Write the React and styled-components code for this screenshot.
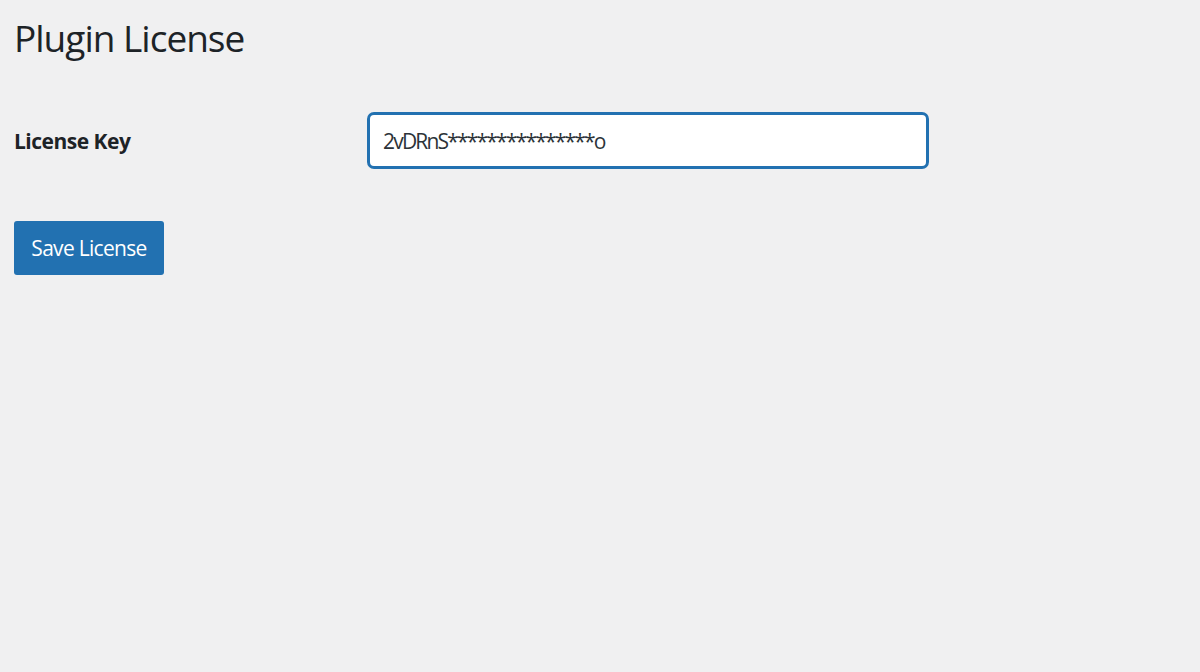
import React, { useState } from 'react';
import styled, { createGlobalStyle } from 'styled-components';

const GlobalStyle = createGlobalStyle`
  html, body {
    margin: 0;
    padding: 0;
    background: #f0f0f1;
  }
  body {
    font-family: "Open Sans", "Noto Sans", sans-serif;
    color: #1d2327;
  }
`;

const Page = styled.div`
  min-height: 672px;
  padding: 16px 14px 0;
  box-sizing: border-box;
`;

const Title = styled.h1`
  margin: 0;
  font-size: 37px;
  font-weight: 400;
  line-height: 44px;
  letter-spacing: -1px;
  color: #1d2327;
`;

const Form = styled.form`
  display: flex;
  flex-direction: column;
  align-items: flex-start;
  margin-top: 52px;
`;

const Row = styled.div`
  display: flex;
  align-items: center;
`;

const Label = styled.label`
  width: 353px;
  font-size: 21px;
  font-weight: 700;
  letter-spacing: -0.5px;
  color: #1d2327;
`;

const KeyInput = styled.input`
  width: 562px;
  height: 57px;
  box-sizing: border-box;
  padding: 0 13px;
  border: 3px solid #2271b1;
  border-radius: 7px;
  background: #fff;
  font-family: "Open Sans", "Noto Sans", sans-serif;
  font-size: 21px;
  letter-spacing: -1.8px;
  color: #2c3338;
  outline: none;
`;

const SaveButton = styled.button`
  margin-top: 52px;
  width: 150px;
  height: 54px;
  border: none;
  border-radius: 3px;
  background: #2271b1;
  color: #fff;
  font-family: "Open Sans", "Noto Sans", sans-serif;
  font-size: 21px;
  letter-spacing: -0.7px;
  cursor: pointer;
`;

export default function App() {
  const [licenseKey, setLicenseKey] = useState('2vDRnS***************o');

  return (
    <>
      <GlobalStyle />
      <Page>
        <Title>Plugin License</Title>
        <Form onSubmit={e => e.preventDefault()}>
          <Row>
            <Label htmlFor="license-key">License Key</Label>
            <KeyInput
              id="license-key"
              type="text"
              value={licenseKey}
              onChange={e => setLicenseKey(e.target.value)}
            />
          </Row>
          <SaveButton type="submit">Save License</SaveButton>
        </Form>
      </Page>
    </>
  );
}
